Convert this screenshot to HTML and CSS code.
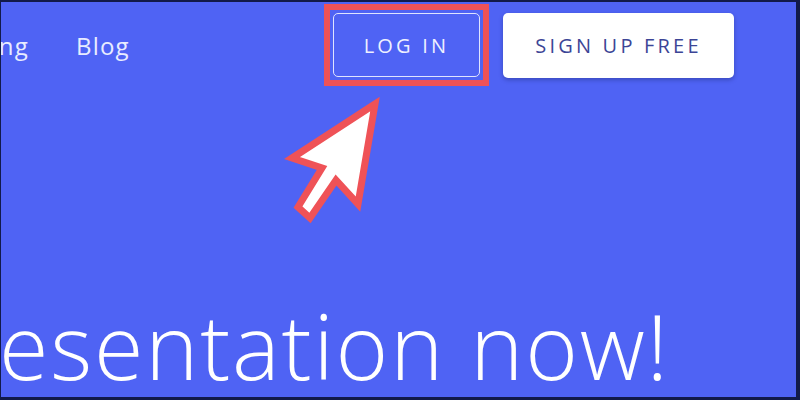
FILE: index.html
```html
<!DOCTYPE html>
<html>
<head>
<meta charset="utf-8">
<link rel="stylesheet" href="styles.css">
</head>
<body>
<div class="page">
  <header class="header">
    <nav class="nav">
      <a class="nav-link nav-cut">Pricing</a>
      <a class="nav-link">Blog</a>
    </nav>
    <div class="actions">
      <span class="highlight"><a class="btn btn-outline">LOG IN</a></span>
      <a class="btn btn-solid">SIGN UP FREE</a>
    </div>
  </header>
  <main class="hero">
    <h1 class="hero-title">esentation now!</h1>
  </main>
  <svg class="pointer" width="800" height="400" viewBox="0 0 800 400">
    <polygon points="375,104 292,158 322,168 298,207 310,218 336,180 358,204" fill="#ffffff" stroke="#ef5257" stroke-width="7" stroke-linejoin="miter"/>
  </svg>
</div>
</body>
</html>
```
FILE: styles.css
```css
* { box-sizing: border-box; }
html, body { margin: 0; padding: 0; }
body {
  width: 800px;
  height: 400px;
  overflow: hidden;
  background: #121a4a;
  font-family: "Open Sans", "Liberation Sans", sans-serif;
}
.page {
  position: relative;
  width: 800px;
  height: 400px;
  background: #4f63f4;
  border-top: 2px solid #121a4a;
  border-right: 4px solid #121a4a;
  border-bottom: 3px solid #121a4a;
  border-left: 1px solid #121a4a;
  display: flex;
  flex-direction: column;
  overflow: hidden;
}
.header {
  display: flex;
  align-items: center;
  padding: 2px 62px 0 0;
}
.nav {
  display: flex;
  gap: 47px;
  margin-left: -56px;
}
.nav-link {
  color: #e8ecff;
  font-size: 24px;
  font-weight: 400;
  letter-spacing: 1.2px;
  text-decoration: none;
}
.actions {
  margin-left: auto;
  display: flex;
  align-items: center;
  gap: 14px;
}
.highlight {
  display: block;
  border: 6px solid #ef5257;
  padding: 3px;
}
.btn {
  display: flex;
  align-items: center;
  justify-content: center;
  height: 64px;
  border-radius: 5px;
  font-size: 20px;
  letter-spacing: 3.2px;
  text-decoration: none;
}
.btn-outline {
  width: 147px;
  color: #eef0ff;
  border: 1.5px solid #dfe4ff;
}
.btn-solid {
  width: 231px;
  height: 65px;
  background: #ffffff;
  color: #3c4596;
  box-shadow: 0 2px 4px rgba(20, 30, 90, 0.35);
}
.hero {
  flex: 1;
  display: flex;
  align-items: flex-end;
}
.hero-title {
  margin: 0 0 0 -2px;
  padding-bottom: 7px;
  color: #ffffff;
  font-size: 90px;
  font-weight: 300;
  letter-spacing: 1.8px;
  line-height: 1;
  white-space: nowrap;
}
.pointer {
  position: absolute;
  left: -1px;
  top: -2px;
  pointer-events: none;
}
```
